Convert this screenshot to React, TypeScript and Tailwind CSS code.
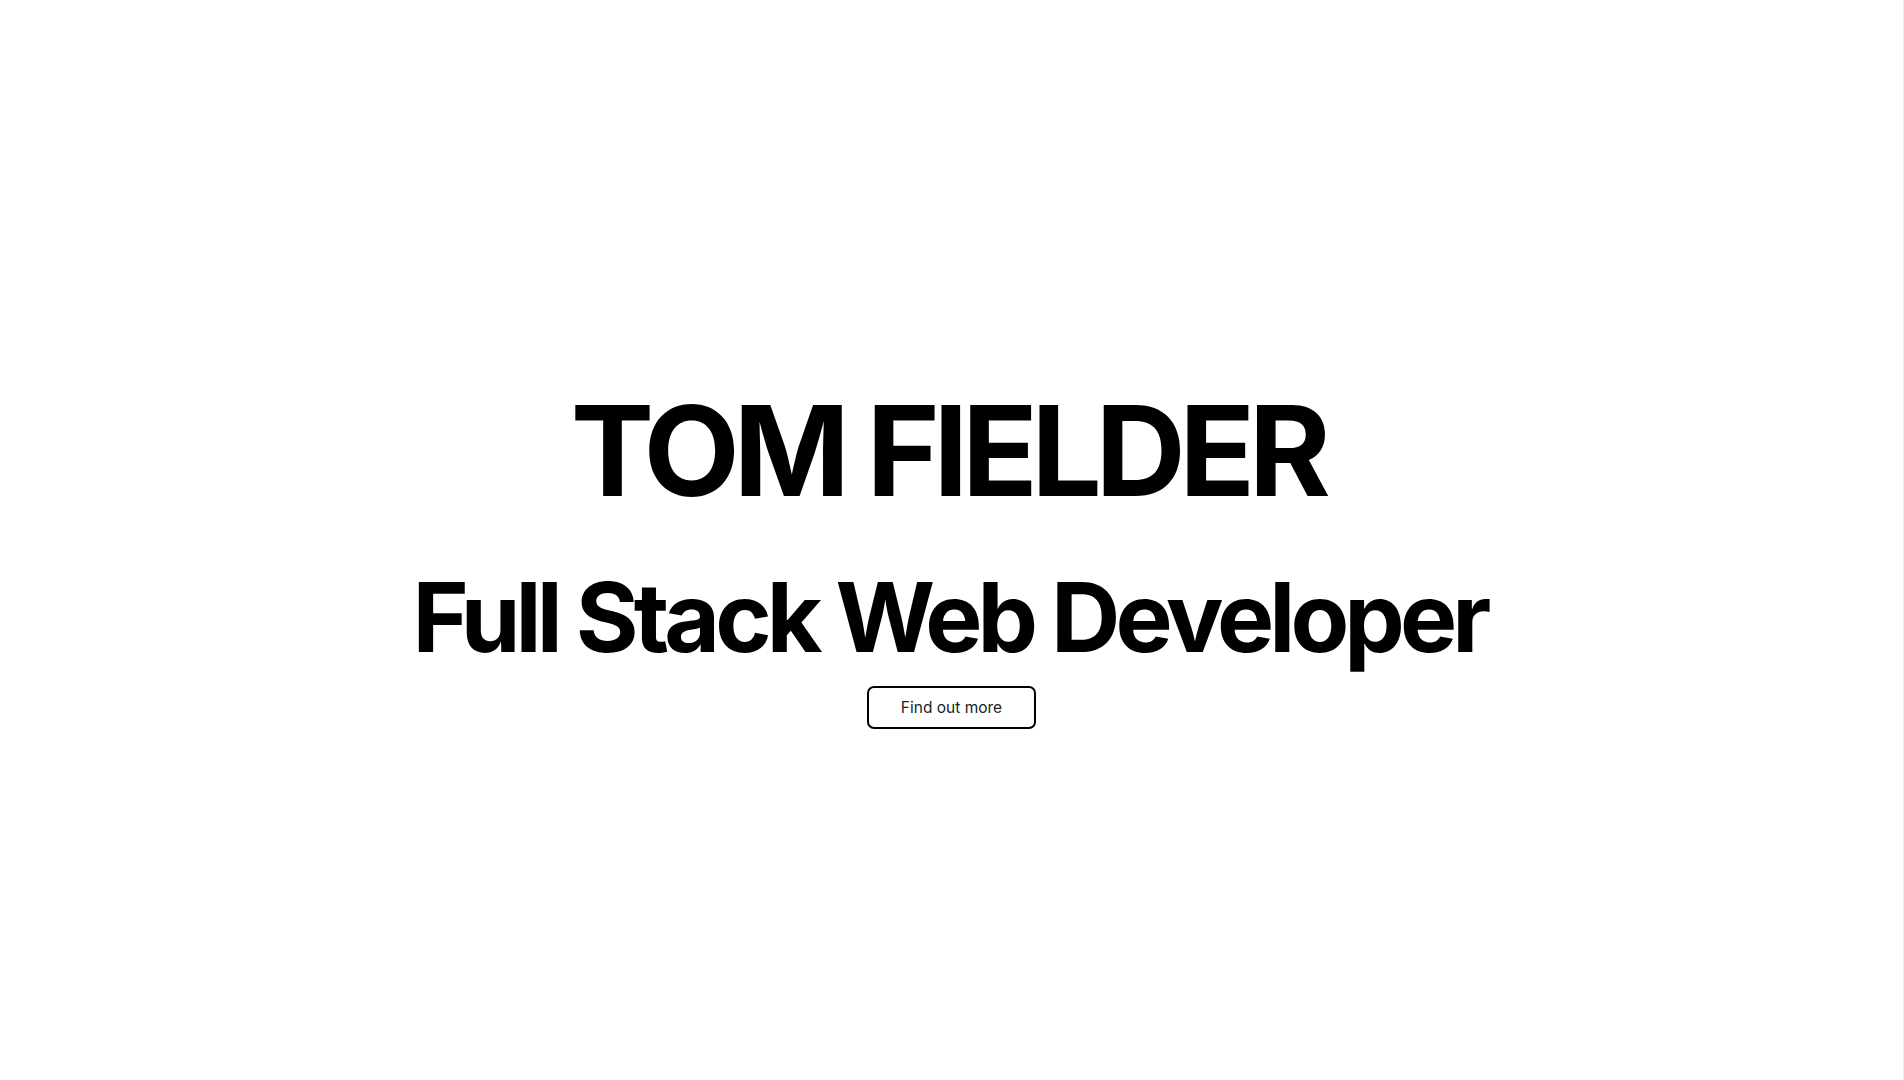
import React from "react";

export default function App() {
  return (
    <div className="w-full h-[1080px] bg-white border-r border-[#ececec] flex flex-col items-center" style={{ fontFamily: "Inter, 'Noto Sans', sans-serif" }}>
      <h1 className="mt-[381px] pr-[8px] text-[125px] leading-[140px] font-bold text-black tracking-[-6.5px]">TOM FIELDER</h1>
      <h2 className="mt-[41px] pr-[4px] text-[96px] leading-[110px] font-bold text-black tracking-[-4.9px]">Full Stack Web Developer</h2>
      <button className="mt-[14px] w-[169px] h-[43px] rounded-[7px] border-2 border-black text-[15.5px] text-[#222] bg-white">Find out more</button>
    </div>
  );
}
